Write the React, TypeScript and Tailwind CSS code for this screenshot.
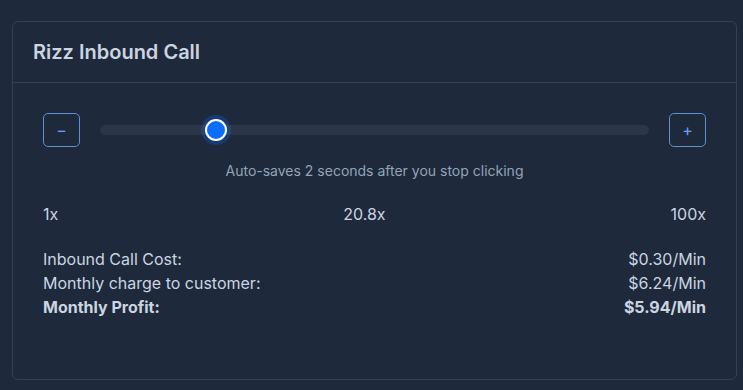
import { useState } from "react";

const MIN = 1;
const MAX = 100;

export default function App() {
   const [value, setValue] = useState(20.8);
   const ratio = (value - MIN) / (MAX - MIN);
   const cost = 0.3;
   const charge = cost * value;

   return (
      <div className="min-h-screen bg-[#1e293b] pt-[21px] pr-[6px] pl-3 font-['Inter',sans-serif]">
         <div className="rounded-md border border-[#334155] bg-[#1e293b]">
            <div className="border-b border-[#334155] px-5 py-4">
               <h2 className="text-xl leading-7 font-semibold text-[#cbd5e1]">Rizz Inbound Call</h2>
            </div>

            <div className="px-[30px] pt-[30px] pb-[60px]">
               <div className="flex items-center gap-5">
                  <button
                     onClick={() => setValue((v) => Math.max(MIN, +(v - 1).toFixed(1)))}
                     className="flex h-[34px] w-[37px] shrink-0 items-center justify-center rounded-[5px] border border-[#5b8fd6] text-base text-[#60a5fa]">
                     −
                  </button>

                  <div className="relative h-[10px] flex-1 rounded-full bg-[#2c3648]">
                     <div
                        className="absolute top-1/2 h-[22px] w-[22px] -translate-x-1/2 -translate-y-1/2 rounded-full border-2 border-white bg-[#0d6efd] shadow-[0_0_0_4px_rgba(13,110,253,0.28)]"
                        style={{ left: `calc(11px + ${ratio} * (100% - 22px))` }}
                     />
                  </div>

                  <button
                     onClick={() => setValue((v) => Math.min(MAX, +(v + 1).toFixed(1)))}
                     className="flex h-[34px] w-[37px] shrink-0 items-center justify-center rounded-[5px] border border-[#5b8fd6] text-base text-[#60a5fa]">
                     +
                  </button>
               </div>

               <p className="mt-3.5 text-center text-sm text-[#94a3b8]">Auto-saves 2 seconds after you stop clicking</p>

               <div className="mt-[21px] flex justify-between text-base text-[#cbd5e1]">
                  <span>{MIN}x</span>
                  <span>{value}x</span>
                  <span>{MAX}x</span>
               </div>

               <div className="mt-[21px] text-base text-[#cbd5e1]">
                  <div className="flex justify-between">
                     <span>Inbound Call Cost:</span>
                     <span>${cost.toFixed(2)}/Min</span>
                  </div>
                  <div className="flex justify-between">
                     <span>Monthly charge to customer:</span>
                     <span>${charge.toFixed(2)}/Min</span>
                  </div>
                  <div className="flex justify-between font-bold">
                     <span>Monthly Profit:</span>
                     <span>${(charge - cost).toFixed(2)}/Min</span>
                  </div>
               </div>
            </div>
         </div>
      </div>
   );
}
